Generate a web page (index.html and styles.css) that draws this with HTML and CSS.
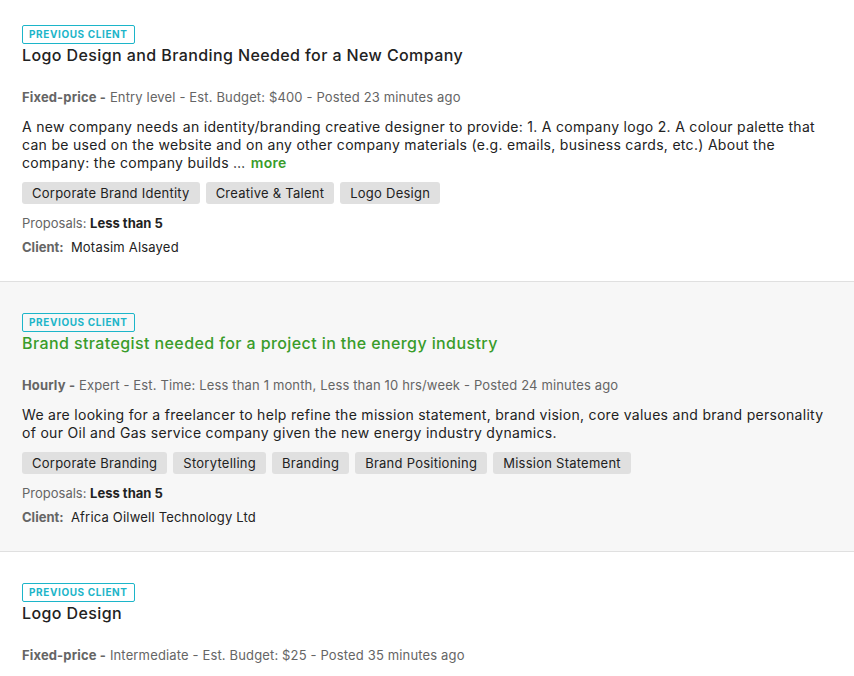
FILE: index.html
```html
<!DOCTYPE html>
<html lang="en">
<head>
  <meta charset="UTF-8">
  <meta name="viewport" content="width=device-width, initial-scale=1.0">
  <title>Job Feed</title>

  <link rel="stylesheet" href="styles.css">
</head>
<body>
  <div class="feed">
    <div class="job job-first">
      <span class="badge">Previous client</span>
      <h2 class="job-title">Logo Design and Branding Needed for a New Company</h2>
      <p class="meta"><b>Fixed-price -</b> Entry level - Est. Budget: $400 - Posted 23 minutes ago</p>
      <p class="desc">A new company needs an identity/branding creative designer to provide: 1. A company logo 2. A colour palette that can be used on the website and on any other company materials (e.g. emails, business cards, etc.) About the company: the company builds &hellip; <a class="more" href="#">more</a></p>
      <div class="tags">
        <span class="tag">Corporate Brand Identity</span>
        <span class="tag">Creative &amp; Talent</span>
        <span class="tag">Logo Design</span>
      </div>
      <p class="info">Proposals: <b>Less than 5</b></p>
      <p class="info"><b class="label">Client:</b>&nbsp; <span class="client">Motasim Alsayed</span></p>
    </div>

    <div class="job job-hover">
      <span class="badge">Previous client</span>
      <h2 class="job-title green">Brand strategist needed for a project in the energy industry</h2>
      <p class="meta"><b>Hourly -</b> Expert - Est. Time: Less than 1 month, Less than 10 hrs/week - Posted 24 minutes ago</p>
      <p class="desc">We are looking for a freelancer to help refine the mission statement, brand vision, core values and brand personality of our Oil and Gas service company given the new energy industry dynamics.</p>
      <div class="tags">
        <span class="tag">Corporate Branding</span>
        <span class="tag">Storytelling</span>
        <span class="tag">Branding</span>
        <span class="tag">Brand Positioning</span>
        <span class="tag">Mission Statement</span>
      </div>
      <p class="info">Proposals: <b>Less than 5</b></p>
      <p class="info"><b class="label">Client:</b>&nbsp; <span class="client">Africa Oilwell Technology Ltd</span></p>
    </div>

    <div class="job">
      <span class="badge">Previous client</span>
      <h2 class="job-title">Logo Design</h2>
      <p class="meta"><b>Fixed-price -</b> Intermediate - Est. Budget: $25 - Posted 35 minutes ago</p>
    </div>
  </div>
</body>
</html>
```

FILE: styles.css
```css
body {
  margin: 0;
  font-family: Inter, "Open Sans", sans-serif;
  color: #222;
  background: #fff;
}

.feed {
  display: flex;
  flex-direction: column;
}

.job {
  padding: 31px 22px 25px;
  border-bottom: 1px solid #e0e0e0;
}

.job-first {
  padding-top: 25px;
}

.job-hover {
  background: #f7f7f7;
}

.badge {
  display: inline-block;
  box-sizing: border-box;
  height: 19px;
  line-height: 17px;
  padding: 0 6px;
  border: 1px solid #1cb5c9;
  border-radius: 2px;
  color: #1cb5c9;
  font-size: 10px;
  font-weight: 700;
  letter-spacing: 0.6px;
  text-transform: uppercase;
  vertical-align: top;
}

.job-title {
  margin: 0;
  font-size: 16px;
  font-weight: 500;
  line-height: 20px;
  letter-spacing: 0.4px;
  color: #222;
}

.job-title.green {
  color: #399c2a;
}

.meta {
  margin: 23px 0 0;
  font-size: 13px;
  line-height: 18px;
  letter-spacing: 0.15px;
  color: #656565;
}

.meta b {
  font-weight: 700;
}

.desc {
  margin: 12px 0 0;
  font-size: 14px;
  line-height: 18px;
  letter-spacing: 0.3px;
  color: #222;
}

.more {
  margin-left: 1px;
  color: #399c2a;
  font-weight: 600;
  text-decoration: none;
}

.tags {
  display: flex;
  flex-wrap: wrap;
  gap: 6px;
  margin-top: 10px;
}

.tag {
  height: 22px;
  line-height: 22px;
  padding: 0 10px;
  border-radius: 3px;
  background: #e0e0e0;
  font-size: 13px;
  letter-spacing: 0.25px;
  color: #222;
}

.info {
  margin: 10px 0 0;
  font-size: 13px;
  line-height: 18px;
  color: #656565;
}

.info + .info {
  margin-top: 6px;
}

.info b {
  color: #222;
  font-weight: 700;
}

.info b.label {
  color: #656565;
}

.client {
  color: #222;
  letter-spacing: 0.2px;
}
```
